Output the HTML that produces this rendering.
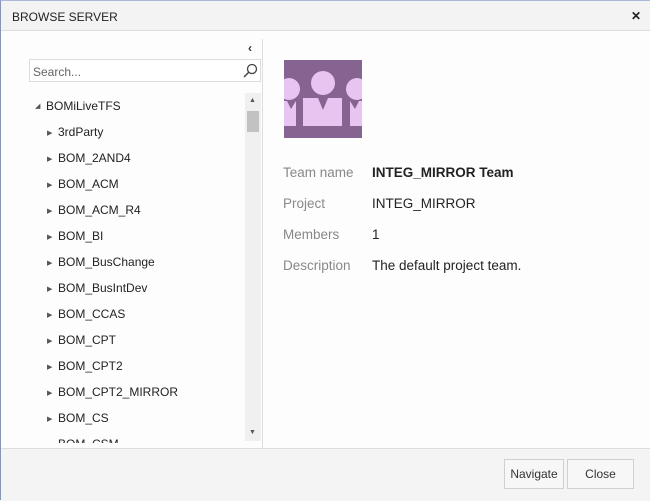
<!DOCTYPE html>
<html><head><style>
*{margin:0;padding:0;box-sizing:border-box}
body{width:650px;height:500px;overflow:hidden;background:#fff;font-family:"Liberation Sans",sans-serif;position:relative;border-left:1px solid #7a96d6;border-top:1px solid #aab8dc}
.t{position:absolute;left:0;top:0;width:650px;height:30px;background:#f3f3f3;border-bottom:1px solid #ddd;font-size:12px;color:#222;padding:9px 11px}
.x{position:absolute;right:10px;top:8px;font-size:12px;font-weight:bold}
.body{position:absolute;left:0;top:30px;width:650px;height:417px;background:#fdfdfd}
.div{position:absolute;left:261px;top:38px;width:1px;height:409px;background:#ddd}
.search{position:absolute;left:28px;top:58px;width:232px;height:23px;border:1px solid #ddd;background:#fff;font-size:12px;color:#666;padding:5px 3px}
.sb{position:absolute;left:244px;top:92px;width:16px;height:348px;background:#f0f0f0}
.th{position:absolute;left:246px;top:110px;width:12px;height:21px;background:#c2c2c2}
.it{position:absolute;font-size:12px;color:#222}
.ar{position:absolute;font-size:7px;color:#555}
.lab{position:absolute;left:282px;font-size:13.5px;color:#888}
.val{position:absolute;left:371px;font-size:13.5px;color:#222}
.foot{position:absolute;left:0;top:447px;width:650px;height:53px;background:#f4f4f4;border-top:1px solid #ddd}
.btn{position:absolute;top:458px;height:30px;border:1px solid #d0d0d0;background:#f7f7f7;font-size:12px;color:#333;text-align:center;line-height:28px}
</style></head><body>
<div class="t">BROWSE SERVER<span class="x">✕</span></div>
<div class="body"></div>
<div class="div"></div>
<div style="position:absolute;left:247px;top:40px;font-size:12px;color:#333;font-weight:bold">‹</div>
<div class="search">Search...</div>
<svg style="position:absolute;left:241px;top:62px" width="16" height="16"><circle cx="10" cy="6" r="4.5" fill="none" stroke="#444" stroke-width="1.3"/><line x1="7" y1="9" x2="2" y2="14" stroke="#444" stroke-width="1.5"/></svg>
<div class="sb"></div><div class="th"></div>
<div class="ar" style="left:248px;top:96px">▲</div>
<div class="ar" style="left:248px;top:428px">▼</div>
<div class="ar" style="left:34px;top:101px">◢</div>
<div class="it" style="left:45px;top:98px">BOMiLiveTFS</div>
<div style="position:absolute;left:0;top:0;width:244px;height:442px;overflow:hidden">
<div class="ar" style="left:46px;top:128px">▶</div><div class="it" style="left:57px;top:124px">3rdParty</div>
<div class="ar" style="left:46px;top:154px">▶</div><div class="it" style="left:57px;top:150px">BOM_2AND4</div>
<div class="ar" style="left:46px;top:180px">▶</div><div class="it" style="left:57px;top:176px">BOM_ACM</div>
<div class="ar" style="left:46px;top:206px">▶</div><div class="it" style="left:57px;top:202px">BOM_ACM_R4</div>
<div class="ar" style="left:46px;top:232px">▶</div><div class="it" style="left:57px;top:228px">BOM_BI</div>
<div class="ar" style="left:46px;top:258px">▶</div><div class="it" style="left:57px;top:254px">BOM_BusChange</div>
<div class="ar" style="left:46px;top:284px">▶</div><div class="it" style="left:57px;top:280px">BOM_BusIntDev</div>
<div class="ar" style="left:46px;top:310px">▶</div><div class="it" style="left:57px;top:306px">BOM_CCAS</div>
<div class="ar" style="left:46px;top:336px">▶</div><div class="it" style="left:57px;top:332px">BOM_CPT</div>
<div class="ar" style="left:46px;top:362px">▶</div><div class="it" style="left:57px;top:358px">BOM_CPT2</div>
<div class="ar" style="left:46px;top:388px">▶</div><div class="it" style="left:57px;top:384px">BOM_CPT2_MIRROR</div>
<div class="ar" style="left:46px;top:414px">▶</div><div class="it" style="left:57px;top:410px">BOM_CS</div>
<div class="it" style="left:57px;top:436px">BOM_CSM</div>
</div>
<svg style="position:absolute;left:283px;top:59px" width="78" height="78"><rect width="78" height="78" fill="#866492"/>
<circle cx="39" cy="23" r="12" fill="#e8c4f0"/><path d="M19 38h15l5 12 5-12h14v28H19z" fill="#e8c4f0"/>
<circle cx="5" cy="29" r="11" fill="#e8c4f0"/><path d="M0 41h3l4 8 5-8v25H0z" fill="#e8c4f0"/>
<circle cx="73" cy="29" r="11" fill="#e8c4f0"/><path d="M66 41l5 8 4-8h3v25H66z" fill="#e8c4f0"/>
</svg>
<div class="lab" style="top:164px">Team name</div><div class="val" style="top:164px;font-weight:bold">INTEG_MIRROR Team</div>
<div class="lab" style="top:195px">Project</div><div class="val" style="top:195px">INTEG_MIRROR</div>
<div class="lab" style="top:226px">Members</div><div class="val" style="top:226px">1</div>
<div class="lab" style="top:257px">Description</div><div class="val" style="top:257px">The default project team.</div>
<div class="foot"></div>
<div class="btn" style="left:503px;width:60px">Navigate</div>
<div class="btn" style="left:566px;width:67px">Close</div>
</body></html>
